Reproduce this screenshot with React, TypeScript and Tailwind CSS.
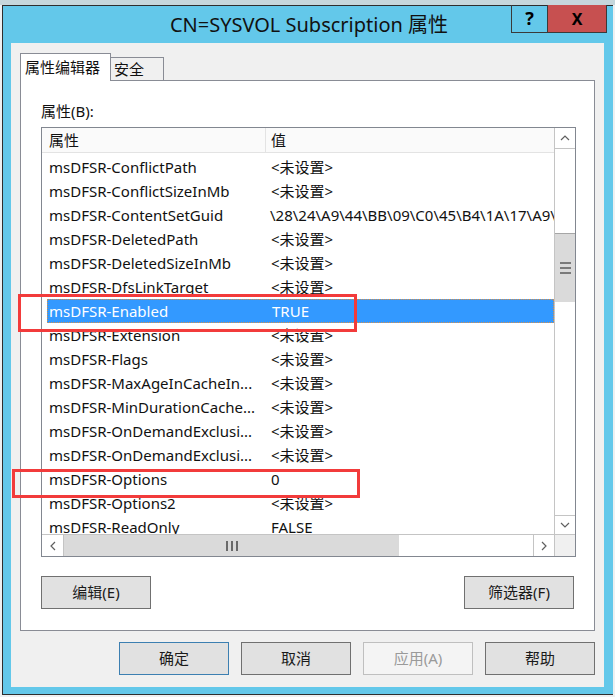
import React from "react"

interface AttrRow {
  name: string
  value: string
  selected?: boolean
}

const rows: AttrRow[] = [
  { name: "msDFSR-ConflictPath", value: "<未设置>" },
  { name: "msDFSR-ConflictSizeInMb", value: "<未设置>" },
  { name: "msDFSR-ContentSetGuid", value: "\\28\\24\\A9\\44\\BB\\09\\C0\\45\\B4\\1A\\17\\A9\\3F" },
  { name: "msDFSR-DeletedPath", value: "<未设置>" },
  { name: "msDFSR-DeletedSizeInMb", value: "<未设置>" },
  { name: "msDFSR-DfsLinkTarget", value: "<未设置>" },
  { name: "msDFSR-Enabled", value: "TRUE", selected: true },
  { name: "msDFSR-Extension", value: "<未设置>" },
  { name: "msDFSR-Flags", value: "<未设置>" },
  { name: "msDFSR-MaxAgeInCacheIn...", value: "<未设置>" },
  { name: "msDFSR-MinDurationCache...", value: "<未设置>" },
  { name: "msDFSR-OnDemandExclusi...", value: "<未设置>" },
  { name: "msDFSR-OnDemandExclusi...", value: "<未设置>" },
  { name: "msDFSR-Options", value: "0" },
  { name: "msDFSR-Options2", value: "<未设置>" },
  { name: "msDFSR-ReadOnly", value: "FALSE" },
]

const font = { fontFamily: '"Segoe UI", "Noto Sans", "Noto Sans CJK SC", sans-serif' }

const Chevron = ({ dir }: { dir: "up" | "down" | "left" | "right" }) => {
  const d = {
    up: "M2 7 L6 3 L10 7",
    down: "M2 3 L6 7 L10 3",
    left: "M7 2 L3 6 L7 10",
    right: "M3 2 L7 6 L3 10",
  }[dir]
  const box = dir === "up" || dir === "down" ? "0 0 12 10" : "0 0 10 12"
  return (
    <svg viewBox={box} className={dir === "up" || dir === "down" ? "w-[12px] h-[10px]" : "w-[10px] h-[12px]"}>
      <path d={d} fill="none" stroke="#606060" strokeWidth="1.2" />
    </svg>
  )
}

const Btn = ({ label, variant }: { label: string; variant?: "default" | "disabled" }) => (
  <div
    className={`w-[110px] h-[33px] flex items-center justify-center text-[15px] border ${
      variant === "default"
        ? "border-[#3c7fb1] bg-[#e1e1e1] text-[#1a1a1a]"
        : variant === "disabled"
        ? "border-[#bfbfbf] bg-[#f4f4f4] text-[#9a9a9a]"
        : "border-[#707070] bg-[#e1e1e1] text-[#1a1a1a]"
    }`}
  >
    {label}
  </div>
)

export default function App() {
  return (
    <div className="relative w-[615px] h-[697px] overflow-hidden bg-[#eef0f1]" style={font}>
      {/* desktop strip behind */}
      <div className="h-[5px] bg-[#c6d7dc]" />

      {/* window */}
      <div className="ml-[2px] w-[611px] h-[690px] border border-[#2e2e2e] border-r-0 bg-[#63c8ea] flex flex-col">
        {/* title bar */}
        <div className="relative h-[37px] flex items-center justify-center">
          <span className="text-[20px] text-[#111] pt-[1px] pl-[2px]">CN=SYSVOL Subscription 属性</span>
          <div className="absolute right-[6px] top-[-1px] flex border border-[#3a3a3a] border-t-0">
            <div className="w-[36px] h-[27px] flex items-center justify-center border-r border-[#3a3a3a] text-[18px] font-bold text-black">?</div>
            <div className="w-[58px] h-[27px] flex items-center justify-center bg-[#c75050] text-[16px] font-bold text-black">X</div>
          </div>
        </div>

        {/* client area */}
        <div className="mx-[8px] w-[593px] h-[644px] bg-[#f0f0f0] flex flex-col pl-[9px] pt-[10px]">
          {/* tabs */}
          <div className="flex items-end h-[28px] relative z-10">
            <div className="w-[91px] h-[28px] bg-white border border-[#898c95] border-b-0 text-[15px] text-[#111] flex items-center pl-[4px]">属性编辑器</div>
            <div className="w-[53px] h-[24px] bg-[#f0f0f0] border border-[#898c95] border-l-0 text-[15px] text-[#111] flex items-center pl-[3px]">安全</div>
          </div>

          {/* tab page */}
          <div className="w-[575px] h-[551px] -mt-px bg-white border border-[#898c95] flex flex-col px-[20px]">
            <div className="mt-[20px] text-[15px] text-[#111] leading-[20px]">属性(B):</div>

            {/* list box */}
            <div className="mt-[6px] w-[535px] h-[430px] border border-[#828790] flex flex-col">
              <div className="flex flex-1 min-h-0">
                <div className="flex-1 min-w-0 flex flex-col overflow-hidden">
                  {/* header */}
                  <div className="h-[25px] shrink-0 flex bg-[#fafafa] border-b border-[#e3e3e3] text-[15px] text-[#111]">
                    <div className="w-[224px] border-r border-[#e3e3e3] pl-[7px] flex items-center">属性</div>
                    <div className="pl-[5px] flex items-center">值</div>
                  </div>
                  <div className="flex-1 min-h-0 overflow-hidden pt-[2px]">
                    {rows.map((r, i) => (
                      <div
                        key={i}
                        className={`h-[24px] ml-[5px] flex items-center text-[15px] whitespace-nowrap ${
                          r.selected ? "bg-[#3399ff] text-white border border-dotted border-[#d8904a]" : "text-[#111]"
                        }`}
                      >
                        <div className={`w-[223px] shrink-0 ${r.selected ? "pl-[1px]" : "pl-[2px]"}`}>{r.name}</div>
                        <div className={r.value.startsWith("\\") ? "pl-0" : "pl-[1px]"}>{r.value}</div>
                      </div>
                    ))}
                  </div>
                </div>

                {/* vertical scrollbar */}
                <div className="w-[21px] shrink-0 border-l border-[#c4c4c4] flex flex-col bg-white">
                  <div className="h-[21px] border-b border-[#c4c4c4] flex items-center justify-center">
                    <Chevron dir="up" />
                  </div>
                  <div className="h-[84px]" />
                  <div className="h-[69px] bg-[#dadada] border-t border-[#a6a6a6] flex flex-col items-center justify-center gap-[3px]">
                    <div className="w-[11px] h-[2px] bg-[#7a7a7a]" />
                    <div className="w-[11px] h-[2px] bg-[#7a7a7a]" />
                    <div className="w-[11px] h-[2px] bg-[#7a7a7a]" />
                  </div>
                  <div className="flex-1" />
                  <div className="h-[19px] border-t border-[#c4c4c4] flex items-center justify-center">
                    <Chevron dir="down" />
                  </div>
                </div>
              </div>

              {/* horizontal scrollbar */}
              <div className="h-[22px] shrink-0 flex border-t border-[#c4c4c4]">
                <div className="w-[22px] border-r border-[#c4c4c4] flex items-center justify-center bg-white">
                  <Chevron dir="left" />
                </div>
                <div className="w-[335px] bg-[#dadada] flex items-center justify-center gap-[3px]">
                  <div className="w-[2px] h-[10px] bg-[#6a6a6a]" />
                  <div className="w-[2px] h-[10px] bg-[#6a6a6a]" />
                  <div className="w-[2px] h-[10px] bg-[#6a6a6a]" />
                </div>
                <div className="flex-1 bg-white" />
                <div className="w-[21px] border-l border-[#c4c4c4] flex items-center justify-center bg-white">
                  <Chevron dir="right" />
                </div>
                <div className="w-[21px] border-l border-[#c4c4c4] bg-[#f0f0f0]" />
              </div>
            </div>

            <div className="mt-[19px] flex justify-between pr-[0px]">
              <Btn label="编辑(E)" />
              <Btn label="筛选器(F)" />
            </div>
          </div>

          {/* dialog buttons */}
          <div className="mt-[11px] flex justify-end gap-[12px] pr-[9px]">
            <Btn label="确定" variant="default" />
            <Btn label="取消" />
            <Btn label="应用(A)" variant="disabled" />
            <Btn label="帮助" />
          </div>
        </div>
      </div>

      {/* red annotation boxes */}
      <div className="absolute left-[18px] top-[294px] w-[339px] h-[38px] border-[3px] border-[#f23b3b]" />
      <div className="absolute left-[12px] top-[469px] w-[348px] h-[29px] border-[3px] border-[#f23b3b]" />
    </div>
  )
}
